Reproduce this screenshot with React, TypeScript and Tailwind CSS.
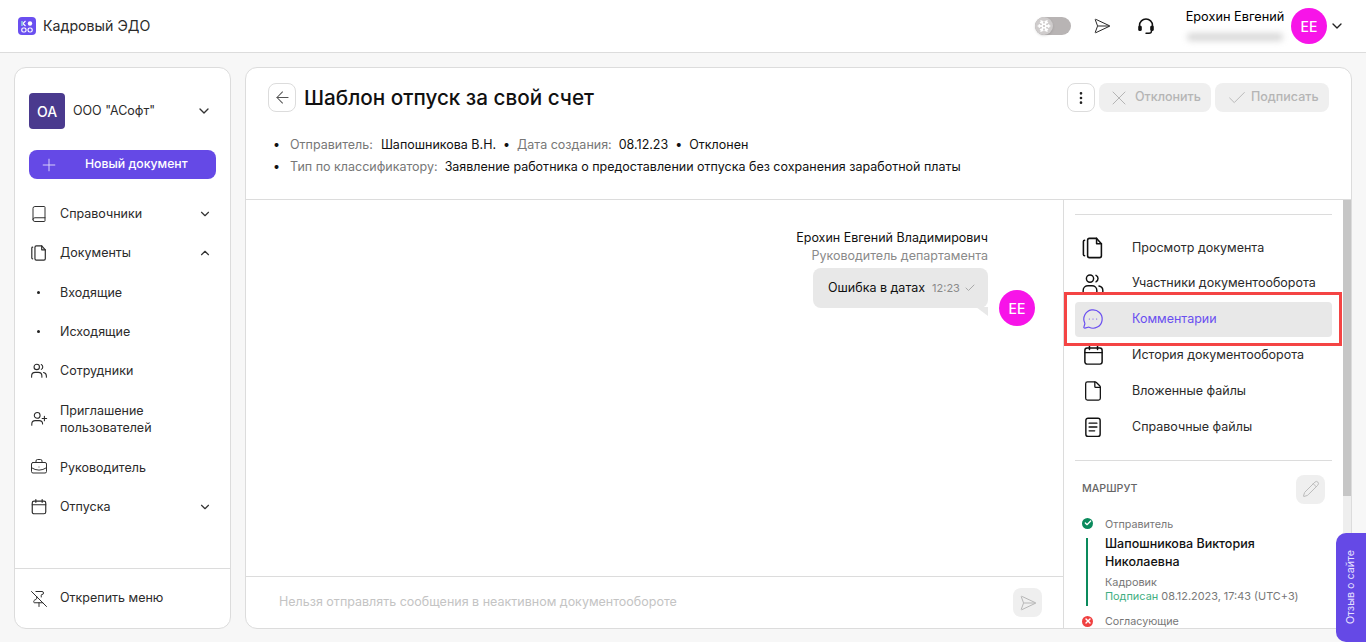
import React from 'react';
import {
  ArrowLeft,
  Book,
  BriefcaseBusiness,
  Check,
  ChevronDown,
  ChevronUp,
  EllipsisVertical,
  File,
  MessageCircleMore,
  Pencil,
  PinOff,
  Plus,
  SendHorizontal,
  Snowflake,
  X,
} from 'lucide-react';

const Docs = ({ className }: { className?: string }) => (
  <svg viewBox="0 0 20 20" fill="none" stroke="currentColor" strokeWidth="1.3" strokeLinejoin="round" strokeLinecap="round" className={className}>
    <path d="M5.500 3.500a1.500 1.500 0 0 1 1.500-1.500h6l4 4.500v10a1.500 1.500 0 0 1-1.500 1.500H7a1.500 1.500 0 0 1-1.500-1.500z" />
    <path d="M13 2v4.500h4" />
    <path d="M3 3.500c-.7 0-1 .5-1 1v11c0 .5.3 1 1 1" />
  </svg>
);

const People = ({ className }: { className?: string }) => (
  <svg viewBox="0 0 20 20" fill="none" stroke="currentColor" strokeWidth="1.2" strokeLinecap="round" className={className}>
    <circle cx="7.500" cy="5.500" r="3" />
    <path d="M12.500 2.800a3 3 0 0 1 0 5.400" />
    <path d="M1.800 17v-1.500c0-2.500 2-4 4-4h3.400c2 0 4 1.500 4 4V17" />
    <path d="M15 11.700c1.800.4 3.200 1.800 3.200 3.800V17" />
  </svg>
);

const UserAdd = ({ className }: { className?: string }) => (
  <svg viewBox="0 0 20 20" fill="none" stroke="currentColor" strokeWidth="1.2" strokeLinecap="round" className={className}>
    <circle cx="8" cy="6" r="3.200" />
    <path d="M2 17v-1.500c0-2.300 1.800-3.700 3.800-3.700h4.400c2 0 3.800 1.400 3.800 3.700" />
    <path d="M16 7v5M13.500 9.500h5" />
  </svg>
);

const Calendar = ({ className }: { className?: string }) => (
  <svg viewBox="0 0 20 20" fill="none" stroke="currentColor" strokeWidth="1.3" strokeLinecap="round" className={className}>
    <rect x="2.500" y="3.500" width="15" height="14" rx="2" />
    <path d="M2.500 7.500h15M6.500 1.800v3M13.500 1.800v3" />
  </svg>
);

const Lines = ({ className }: { className?: string }) => (
  <svg viewBox="0 0 20 20" fill="none" stroke="currentColor" strokeWidth="1.3" strokeLinecap="round" className={className}>
    <rect x="3.500" y="2" width="13" height="16.500" rx="2" />
    <path d="M6.500 6.500h7M6.500 10h7M6.500 13.500h5" />
  </svg>
);

const HeadsetIcon = ({ className }: { className?: string }) => (
  <svg viewBox="0 0 18 18" fill="none" className={className}>
    <path d="M2.500 10V8.500a6.500 6.500 0 0 1 13 0V10" stroke="currentColor" strokeWidth="1.500" />
    <rect x="1.200" y="8.500" width="3.600" height="5.500" rx="1.600" fill="currentColor" />
    <rect x="13.200" y="8.500" width="3.600" height="5.500" rx="1.600" fill="currentColor" />
    <path d="M14.500 14c0 1.500-1.200 2.300-2.500 2.300H9" stroke="currentColor" strokeWidth="1.400" strokeLinecap="round" />
  </svg>
);

const Logo = () => (
  <svg viewBox="0 0 18 18" className="w-[18px] h-[18px]">
    <rect width="18" height="18" rx="4" fill="#6a4ff0" />
    <path d="M4 4v5" stroke="#8fe0d8" strokeWidth="1.400" />
    <path d="M5 6.500L7.500 4M5 6.500L7.500 9" stroke="#fff" strokeWidth="1.100" fill="none" />
    <circle cx="12" cy="6.500" r="2.200" fill="#fff" />
    <rect x="3.800" y="11" width="4.200" height="4" rx="1.500" fill="none" stroke="#fff" strokeWidth="1.200" />
    <rect x="10" y="11" width="4.200" height="4" rx="1.800" fill="none" stroke="#fff" strokeWidth="1.200" />
  </svg>
);

const MenuItem = ({ icon, label, chevron }: { icon: React.ReactNode; label: React.ReactNode; chevron?: 'up' | 'down' }) => (
  <div className="flex items-center py-[11px] pl-[15px] pr-[18px] text-[12.5px] leading-[17.25px] text-[#2b2b2b]">
    <div className="w-[30px] h-[17px] shrink-0 flex items-center">{icon}</div>
    <div className="flex-1">{label}</div>
    {chevron === 'down' && <ChevronDown className="w-3.5 h-3.5 text-[#333]" />}
    {chevron === 'up' && <ChevronUp className="w-3.5 h-3.5 text-[#333]" />}
  </div>
);

const SideRow = ({ icon, label, active }: { icon: React.ReactNode; label: string; active?: boolean }) => (
  <div className={`h-[35.8px] flex items-center pl-[6px] rounded text-[12.5px] ${active ? 'bg-[#e8e8e8] text-[#6a4ff0]' : 'text-[#2b2b2b]'}`}>
    <div className="w-6 shrink-0 flex justify-center mr-[27px]">{icon}</div>
    <span>{label}</span>
  </div>
);

export default function App() {
  return (
    <div className="relative h-[642px] overflow-hidden bg-[#f7f7f7] flex flex-col font-['Inter',sans-serif] text-[#111]">
      {/* Header */}
      <header className="h-[53px] shrink-0 bg-white border-b border-[#dcdcdc] flex items-center pl-[18px] pr-[21px]">
        <Logo />
        <span className="ml-[7px] text-[14.2px] text-[#2b2b2b]">Кадровый ЭДО</span>
        <div className="flex-1" />
        <div className="w-9 h-[18px] rounded-full bg-[#b8b4b4] relative mr-[22px]">
          <div className="absolute left-0 top-0 w-[18px] h-[18px] rounded-full bg-[#cfcccc] shadow flex items-center justify-center">
            <Snowflake className="w-3.5 h-3.5 text-white" strokeWidth={2.5} />
          </div>
        </div>
        <SendHorizontal className="w-[18px] h-[18px] text-[#222] mr-[26px]" strokeWidth={1.3} />
        <HeadsetIcon className="w-[18px] h-[18px] text-[#111] mr-[28px]" />
        <div className="w-[104px] flex flex-col items-center mr-[4px]">
          <span className="text-[12.75px] leading-4 -mt-[3px] text-black">Ерохин Евгений</span>
          <div className="mt-[8px] w-[96px] h-[8px] rounded bg-[#d8d8d8] blur-[3px]" />
        </div>
        <div className="w-9 h-9 rounded-full bg-[#f714e8] text-white text-[14px] font-medium flex items-center justify-center">ЕЕ</div>
        <ChevronDown className="w-4 h-4 ml-[2px] text-[#222]" />
      </header>

      <div className="flex-1 min-h-0 flex gap-[14px] pt-[14px] px-[14px] pb-[13px]">
        {/* Sidebar */}
        <aside className="w-[217px] shrink-0 bg-white border border-[#dcdcdc] rounded-xl flex flex-col">
          <div className="flex-1 pt-[25px]">
            <div className="flex items-center pl-[14px] pr-[18px]">
              <div className="w-9 h-9 rounded bg-[#4a3a8e] text-white text-[14px] font-medium flex items-center justify-center">ОА</div>
              <span className="ml-2 flex-1 text-[12.5px] text-[#2b2b2b]">ООО "АСофт"</span>
              <ChevronDown className="w-4 h-4 text-[#333]" />
            </div>
            <button className="mt-[21px] ml-[14px] w-[187px] h-[29px] rounded-lg bg-[#6549e6] text-white text-[12.25px] font-medium flex items-center pl-[10px]">
              <Plus className="w-5 h-5 text-[#d8d0fa]" strokeWidth={1.2} />
              <span className="ml-[26px]">Новый документ</span>
            </button>
            <div className="mt-[15px]">
              <MenuItem icon={<Book className="w-[18px] h-[18px]" strokeWidth={1.3} />} label="Справочники" chevron="down" />
              <MenuItem icon={<Docs className="w-[18px] h-[18px]" />} label="Документы" chevron="up" />
              <MenuItem icon={<div className="ml-[7px] w-[3px] h-[3px] rounded-full bg-[#222]" />} label="Входящие" />
              <MenuItem icon={<div className="ml-[7px] w-[3px] h-[3px] rounded-full bg-[#222]" />} label="Исходящие" />
              <MenuItem icon={<People className="w-[18px] h-[18px]" />} label="Сотрудники" />
              <MenuItem icon={<UserAdd className="w-[18px] h-[18px]" />} label={<div className="py-[0.5px]">Приглашение<br />пользователей</div>} />
              <MenuItem icon={<BriefcaseBusiness className="w-[18px] h-[18px]" strokeWidth={1.3} />} label="Руководитель" />
              <MenuItem icon={<Calendar className="w-[18px] h-[18px]" />} label="Отпуска" chevron="down" />
            </div>
          </div>
          <div className="h-[60px] border-t border-[#dcdcdc] flex items-center pl-[15px] text-[12.5px] text-[#2b2b2b]">
            <div className="w-[30px]"><PinOff className="w-[18px] h-[18px]" strokeWidth={1.3} /></div>
            Открепить меню
          </div>
        </aside>

        {/* Main card */}
        <main className="flex-1 min-w-0 bg-white border border-[#dcdcdc] rounded-xl flex flex-col overflow-hidden">
          <div className="h-[132px] shrink-0 border-b border-[#dcdcdc] pl-[22px] pr-[22px] pt-[14px]">
            <div className="flex items-center">
              <button className="w-7 h-[29px] rounded-lg border border-[#dcdcdc] flex items-center justify-center">
                <ArrowLeft className="w-[19px] h-[19px] text-[#555]" strokeWidth={1.3} />
              </button>
              <h1 className="ml-2 text-[20.7px] font-medium text-[#111]">Шаблон отпуск за свой счет</h1>
              <div className="flex-1" />
              <button className="w-7 h-[29px] rounded-lg border border-[#dcdcdc] flex items-center justify-center">
                <EllipsisVertical className="w-4 h-4 text-[#222]" />
              </button>
              <button className="ml-[4px] w-[112px] h-[29px] rounded-lg bg-[#efefef] text-[#b5b5b5] text-[12.5px] font-medium flex items-center pl-[8px] gap-1">
                <X className="w-6 h-6" strokeWidth={1} />Отклонить
              </button>
              <button className="ml-[4px] w-[114px] h-[29px] rounded-lg bg-[#efefef] text-[#b5b5b5] text-[12.5px] font-medium flex items-center pl-[11px] gap-[3px]">
                <Check className="w-[22px] h-[22px]" strokeWidth={1} />Подписать
              </button>
            </div>
            <div className="mt-[21px] text-[12.5px] leading-[22px] ml-[5px]">
              <div className="flex items-center">
                <span className="mr-[10px]">•</span>
                <span className="text-[#777]">Отправитель:</span>
                <span className="ml-2">Шапошникова В.Н.</span>
                <span className="mx-[7px]">•</span>
                <span className="text-[#777]">Дата создания:</span>
                <span className="ml-[7px]">08.12.23</span>
                <span className="mx-[7px]">•</span>
                <span>Отклонен</span>
              </div>
              <div className="flex items-center">
                <span className="mr-[10px]">•</span>
                <span className="text-[#777]">Тип по классификатору:</span>
                <span className="ml-[7px]">Заявление работника о предоставлении отпуска без сохранения заработной платы</span>
              </div>
            </div>
          </div>

          <div className="flex-1 min-h-0 flex">
            {/* Chat */}
            <div className="flex-1 min-w-0 flex flex-col">
              <div className="flex-1 pt-[30px] pr-[28px] flex justify-end">
                <div className="flex flex-col items-end mr-[11px]">
                  <div className="text-[12.5px] leading-4 text-[#111]">Ерохин Евгений Владимирович</div>
                  <div className="mt-[2px] text-[12.5px] leading-4 text-[#8a8a8a]">Руководитель департамента</div>
                  <div className="relative mt-[4px] h-10 w-[175px] rounded-lg bg-[#e8e8e8] flex items-center pl-[15px] text-[12.5px]">
                    <span>Ошибка в датах</span>
                    <span className="ml-[7px] text-[11px] text-[#8a8a8a]">12:23</span>
                    <Check className="ml-[4px] w-3 h-3 text-[#aaaaaa]" />
                    <div className="absolute right-0 -bottom-[8px] w-0 h-0 border-t-[9px] border-t-[#e8e8e8] border-l-[12px] border-l-transparent" />
                  </div>
                </div>
                <div className="w-9 h-9 mt-[60px] rounded-full bg-[#f714e8] text-white text-[14px] font-medium flex items-center justify-center">ЕЕ</div>
              </div>
              <div className="h-[52px] shrink-0 border-t border-[#dcdcdc] flex items-center pl-[33px] pr-[21px]">
                <span className="flex-1 text-[12.5px] text-[#c4c4c4]">Нельзя отправлять сообщения в неактивном документообороте</span>
                <div className="w-[29px] h-[29px] rounded-lg bg-[#efefef] flex items-center justify-center">
                  <SendHorizontal className="w-[18px] h-[18px] text-[#b5b5b5]" strokeWidth={1.3} />
                </div>
              </div>
            </div>

            {/* Right panel */}
            <div className="w-[288px] shrink-0 border-l border-[#dcdcdc] flex overflow-hidden">
              <div className="flex-1 min-w-0 pl-[11px] pr-[11px] pt-[14px]">
                <div className="border-t border-[#dcdcdc]" />
                <div className="mt-[15px]">
                  <SideRow icon={<Docs className="w-6 h-6 text-[#111]" />} label="Просмотр документа" />
                  <SideRow icon={<People className="w-6 h-6 text-[#111]" />} label="Участники документооборота" />
                  <SideRow active icon={<MessageCircleMore className="w-[22px] h-[22px] text-[#6a4ff0]" strokeWidth={1.3} />} label="Комментарии" />
                  <SideRow icon={<Calendar className="w-[23px] h-[23px] text-[#111]" />} label="История документооборота" />
                  <SideRow icon={<File className="w-[22px] h-[22px] text-[#111]" strokeWidth={1.4} />} label="Вложенные файлы" />
                  <SideRow icon={<Lines className="w-[22px] h-[22px] text-[#111]" />} label="Справочные файлы" />
                </div>
                <div className="mt-[15px] border-t border-[#dcdcdc]" />
                <div className="mt-[14px] flex items-center justify-between pl-[7px] pr-[7px]">
                  <span className="text-[10.7px] font-medium text-[#666]">МАРШРУТ</span>
                  <div className="w-[29px] h-[29px] rounded-lg bg-[#efefef] flex items-center justify-center">
                    <Pencil className="w-[18px] h-[18px] text-[#b5b5b5]" strokeWidth={1.2} />
                  </div>
                </div>
                <div className="relative mt-[14px] pl-[30px]">
                  <div className="absolute left-[7px] top-0 w-[11px] h-[11px] rounded-full bg-[#0a8a5c] flex items-center justify-center">
                    <Check className="w-2 h-2 text-white" strokeWidth={4} />
                  </div>
                  <div className="absolute left-[11px] top-[20px] w-[2px] h-[68px] bg-[#0a8a5c]" />
                  <div className="text-[10.75px] leading-[14px] text-[#777]">Отправитель</div>
                  <div className="mt-[3px] w-[190px] text-[12.5px] font-medium leading-[18px] text-[#111]">Шапошникова Виктория Николаевна</div>
                  <div className="mt-[4px] text-[10.9px] leading-[14px] text-[#777]">Кадровик</div>
                  <div className="text-[10.9px] leading-[14px] text-[#777]"><span className="text-[#3fae82]">Подписан</span> 08.12.2023, 17:43 (UTC+3)</div>
                </div>
                <div className="relative mt-[12px] pl-[30px]">
                  <div className="absolute left-[7px] top-[1px] w-[11px] h-[11px] rounded-full bg-[#f04040] flex items-center justify-center">
                    <X className="w-2 h-2 text-white" strokeWidth={4} />
                  </div>
                  <div className="text-[10.75px] leading-[14px] text-[#777]">Согласующие</div>
                </div>
              </div>
              {/* Scrollbar */}
              <div className="w-[8px] shrink-0 bg-[#eeeeee]">
                <div className="h-[296px] bg-[#c6c6c6]" />
              </div>
            </div>
          </div>
        </main>
      </div>

      {/* Annotation frame */}
      <div className="absolute left-[1064px] top-[292px] w-[278px] h-[54px] border-[3px] border-[#f44444] pointer-events-none" />

      {/* Feedback tab */}
      <div className="absolute right-0 bottom-0 w-[30px] h-[109px] bg-[#6549e6] rounded-l-[10px] flex items-center justify-center">
        <span className="text-[#e6e0ff] text-[10.7px] whitespace-nowrap -rotate-90">Отзыв о сайте</span>
      </div>
    </div>
  );
}
